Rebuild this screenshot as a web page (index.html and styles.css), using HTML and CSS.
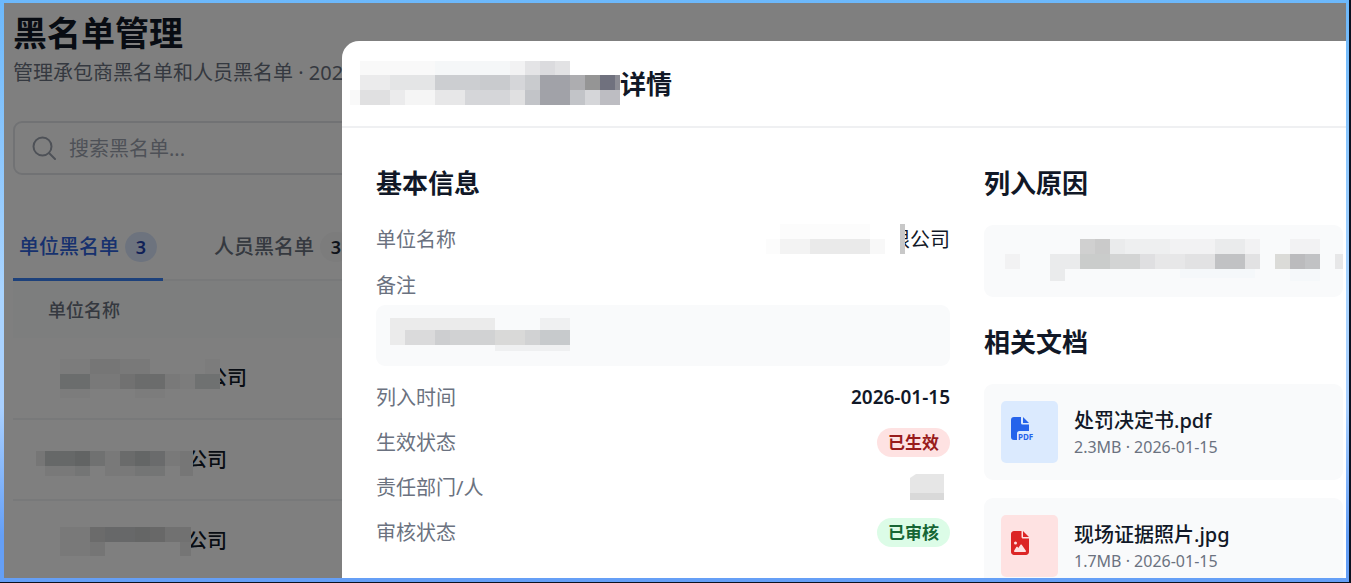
FILE: index.html
```html
<!DOCTYPE html>
<html lang="zh-CN">
<head>
<meta charset="utf-8">
<title>黑名单管理</title>
<link rel="stylesheet" href="styles.css">
</head>
<body>
<div class="frame">
<div class="screen">
  <main class="page">
    <h1 class="page-title">黑名单管理</h1>
    <p class="page-subtitle">管理承包商黑名单和人员黑名单 · 2026-01</p>
    <label class="search">
      <svg class="search-icon" viewBox="0 0 24 24" fill="none" stroke="currentColor" stroke-width="2" stroke-linecap="round" aria-hidden="true"><circle cx="10.500" cy="10.500" r="9"/><path d="M17 17l6 6"/></svg>
      <input class="search-input" type="text" placeholder="搜索黑名单..." aria-label="搜索黑名单">
    </label>
    <nav class="tabs">
      <button class="tab tab-active" type="button">单位黑名单<span class="count count-active">3</span></button>
      <button class="tab" type="button">人员黑名单<span class="count">3</span></button>
    </nav>
    <table class="list">
      <thead><tr><th scope="col">单位名称</th></tr></thead>
      <tbody>
        <tr><td><div class="company">
          <svg class="mosaic" width="184" height="40" viewBox="36 358 184 40" shape-rendering="crispEdges" aria-hidden="true"><path fill="#fff" d="M195 358h25v40h-25z"/><path fill="#f3f3f3" d="M120 359h30v15h-30zM90 374h30v15H90zM165 374h15v15h-15z"/><path fill="#f9f9f9" d="M60 359h30v15H60zM60 389h30v14H60zM135 389h30v14h-30z"/><path fill="#ececec" d="M90 359h30v15H90z"/><path fill="#d7dadb" d="M60 374h30v15H60z"/><path fill="#e2e2e2" d="M120 374h15v15h-15z"/><path fill="#d6d8d8" d="M135 374h30v15h-30z"/><path fill="#f9f9f9" d="M180 374h15v15h-15zM205 359h15v15h-15z"/><path fill="#dfe2e3" d="M195 374h25v15h-25z"/></svg><span class="company-name tuck-lg">公司</span></div></td></tr>
        <tr><td><div class="company">
          <svg class="mosaic" width="157" height="40" viewBox="36 438 157 40" shape-rendering="crispEdges" aria-hidden="true"><path fill="#fff" d="M180 438h13v40h-13z"/><path fill="#ececec" d="M36 449h9v15h-9zM141 449h15v15h-15z"/><path fill="#ccd0d0" d="M45 449h30v15H45z"/><path fill="#c5c8c8" d="M75 449h15v15H75z"/><path fill="#e0e2e3" d="M90 449h15v15H90z"/><path fill="#f2f2f2" d="M45 464h30v10H45zM105 449h15v15h-15zM105 464h30v10h-30zM165 449h15v15h-15z"/><path fill="#e8eaeb" d="M75 464h15v10H75zM135 464h30v10h-30z"/><path fill="#d5d7d7" d="M120 449h15v15h-15z"/><path fill="#c9cccd" d="M135 449h15v15h-15z"/><path fill="#d5d6d8" d="M150 449h15v15h-15z"/><path fill="#ededed" d="M180 449h13v25h-13z"/></svg><span class="company-name tuck-md">公司</span></div></td></tr>
        <tr><td><div class="company">
          <svg class="mosaic" width="155" height="40" viewBox="36 518 155 40" shape-rendering="crispEdges" aria-hidden="true"><path fill="#fff" d="M180 518h11v40h-11z"/><path fill="#f2f2f2" d="M60 524h30v15H60zM60 539h30v14H60z"/><path fill="#d7d7d7" d="M90 524h15v15H90z"/><path fill="#cfd1d2" d="M105 524h30v15h-30z"/><path fill="#cbcccd" d="M135 524h15v15h-15z"/><path fill="#d0d1d1" d="M150 524h15v15h-15z"/><path fill="#e2e2e2" d="M165 524h26v15h-26z"/><path fill="#ebebeb" d="M90 539h15v14H90zM180 539h11v14h-11z"/></svg><span class="company-name tuck-sm">公司</span></div></td></tr>
      </tbody>
    </table>
  </main>

  <div class="overlay">
    <section class="modal" role="dialog" aria-labelledby="modal-title">
      <header class="modal-header">
        <svg class="mosaic" width="270" height="46" viewBox="350 60 270 46" shape-rendering="crispEdges" aria-hidden="true"><path fill="#f9f9f9" d="M360 60h75v14h-75zM350 89h10v15h-10z"/><path fill="#f5f7f8" d="M435 60h75v14h-75z"/><path fill="#f2f2f3" d="M510 60h15v14h-15z"/><path fill="#e4e4e6" d="M525 60h15v14h-15z"/><path fill="#dbdbde" d="M540 60h15v14h-15z"/><path fill="#e2e2e4" d="M555 60h15v14h-15z"/><path fill="#ebebec" d="M360 74h30v15h-30zM390 89h15v15h-15z"/><path fill="#e4e5e6" d="M390 74h45v15h-45z"/><path fill="#ccced1" d="M435 74h45v15h-45z"/><path fill="#c9cbce" d="M480 74h30v15h-30zM525 74h15v15h-15z"/><path fill="#d5d6d9" d="M510 74h15v15h-15zM465 89h45v15h-45zM585 89h15v15h-15z"/><path fill="#a1a2a8" d="M540 74h30v30h-30z"/><path fill="#adadb0" d="M570 74h15v15h-15z"/><path fill="#959595" d="M585 74h15v15h-15z"/><path fill="#70717e" d="M600 74h15v15h-15z"/><path fill="#8c8c94" d="M615 74h5v15h-5z"/><path fill="#e0e0e1" d="M360 89h30v15h-30zM510 89h15v15h-15z"/><path fill="#f5f5f5" d="M405 89h30v15h-30z"/><path fill="#e7e7e8" d="M435 89h30v15h-30z"/><path fill="#c2c4c8" d="M525 89h15v15h-15zM570 89h15v15h-15z"/><path fill="#bdbdc2" d="M600 89h20v15h-20z"/></svg><h2 class="heading" id="modal-title">详情</h2>
      </header>
      <div class="modal-body">
        <section class="info">
          <h3 class="heading">基本信息</h3>
          <dl class="fields">
            <div class="field"><dt>单位名称</dt><dd class="field-company"><svg class="mosaic" width="145" height="30" viewBox="760 224 145 30" shape-rendering="crispEdges" aria-hidden="true"><path fill="#fff" d="M885 224h20v30h-20z"/><path fill="#fcfcfc" d="M780 224h90v15h-90zM766 239h14v15h-14z"/><path fill="#f3f3f3" d="M780 239h30v15h-30z"/><path fill="#eaeaea" d="M810 239h60v15h-60z"/><path fill="#f8f8f8" d="M870 239h15v15h-15z"/><path fill="#c8c8c8" d="M900 224h5v30h-5z"/></svg><span class="tuck-field">限公司</span></dd></div>
            <div class="field field-stacked"><dt>备注</dt><dd class="note note-remark"><svg class="mosaic" width="180" height="36" viewBox="390 316 180 36" shape-rendering="crispEdges" aria-hidden="true"><path fill="#ebebeb" d="M390 317h105v27H390z"/><path fill="#eff0f1" d="M540 317h30v12h-30zM495 344h75v6h-75z"/><path fill="#dadadb" d="M405 329h30v15h-30z"/><path fill="#cdced0" d="M435 329h15v15h-15z"/><path fill="#d1d2d3" d="M450 329h45v15h-45zM525 329h15v15h-15z"/><path fill="#d9d9d8" d="M495 329h30v15h-30z"/><path fill="#c7cacc" d="M540 329h30v15h-30z"/></svg></dd></div>
            <div class="field"><dt>列入时间</dt><dd class="date">2026-01-15</dd></div>
            <div class="field"><dt>生效状态</dt><dd><span class="badge badge-red">已生效</span></dd></div>
            <div class="field"><dt>责任部门/人</dt><dd class="field-owner"><svg class="mosaic" width="34" height="26" viewBox="0 0 34 26" aria-hidden="true"><path fill="#e6e6e6" d="M0 4l6-4h28v26H0z"/><path fill="#d9d9d9" d="M0 19h34v7H0z"/></svg></dd></div>
            <div class="field"><dt>审核状态</dt><dd><span class="badge badge-green">已审核</span></dd></div>
          </dl>
        </section>
        <div class="aside">
          <section>
            <h3 class="heading">列入原因</h3>
            <div class="note note-reason"><svg class="mosaic" width="343" height="48" viewBox="1000 237 343 48" shape-rendering="crispEdges" aria-hidden="true"><path fill="#d0d0d0" d="M1080 239h15v15h-15z"/><path fill="#cacaca" d="M1095 239h15v15h-15z"/><path fill="#eaebec" d="M1110 239h15v15h-15zM1215 239h30v15h-30zM1050 254h30v15h-30zM1050 269h15v12h-15z"/><path fill="#eeeff0" d="M1125 239h45v15h-45z"/><path fill="#f2f2f3" d="M1170 239h45v15h-45zM1245 239h15v15h-15zM1290 239h30v15h-30zM1005 254h15v15h-15z"/><path fill="#cacccb" d="M1080 254h30v15h-30z"/><path fill="#d3d4d4" d="M1110 254h30v15h-30z"/><path fill="#dfdfe1" d="M1140 254h15v15h-15z"/><path fill="#e7e7e8" d="M1155 254h30v15h-30zM1335 254h8v15h-8z"/><path fill="#e2e2e3" d="M1185 254h30v15h-30zM1245 254h15v15h-15z"/><path fill="#c1c2c4" d="M1215 254h30v15h-30zM1305 254h15v15h-15z"/><path fill="#dbdbd8" d="M1275 254h15v15h-15z"/><path fill="#bbbbbd" d="M1290 254h15v15h-15z"/><path fill="#f5f8fa" d="M1180 269h75v9h-75zM1290 269h30v12h-30z"/></svg></div>
          </section>
          <section>
            <h3 class="heading">相关文档</h3>
            <ul class="docs">
              <li class="doc">
                <span class="doc-icon doc-pdf"><svg width="26" height="30" viewBox="0 0 26 30" fill="currentColor" aria-hidden="true"><path d="M3 0h7v6q0 1.500 1.500 1.500H18V14H8.500Q6 14 6 16.500V23H3q-3 0-3-3V3Q0 0 3 0z"/><path d="M12 0l6 6h-6z"/><text class="pdf-label" x="7" y="23">PDF</text></svg></span>
                <div><div class="doc-name">处罚决定书.pdf</div><div class="doc-meta">2.3MB · 2026-01-15</div></div>
              </li>
              <li class="doc">
                <span class="doc-icon doc-image"><svg width="18" height="24" viewBox="0 0 384 512" fill="currentColor" aria-hidden="true"><path d="M64 0C28.700 0 0 28.700 0 64V448c0 35.300 28.700 64 64 64H320c35.300 0 64-28.700 64-64V160H256c-17.700 0-32-14.300-32-32V0H64zM256 0V128H384L256 0zM64 256a32 32 0 1 1 64 0 32 32 0 1 1-64 0zm152 32c5.300 0 10.200 2.600 13.200 6.900l88 128c3.400 4.900 3.700 11.300 1 16.500s-8.200 8.600-14.200 8.600H80c-5.800 0-11.100-3.100-13.900-8.100s-2.800-11.200.2-16.100l48-80c2.900-4.800 8.100-7.800 13.700-7.800s10.800 2.900 13.700 7.800l12.800 21.400 48.300-70.200c3-4.300 7.900-6.900 13.200-6.900z"/></svg></span>
                <div><div class="doc-name">现场证据照片.jpg</div><div class="doc-meta">1.7MB · 2026-01-15</div></div>
              </li>
            </ul>
          </section>
        </div>
      </div>
    </section>
  </div>
</div>
</div>
</body>
</html>
```

FILE: styles.css
```css
* { box-sizing: border-box; }

body {
  margin: 0;
  height: 100vh;
  overflow: hidden;
  padding: 0 2px 1px 0;
  background: #0b1220;
  color: #111827;
  font: 20px/28px "Noto Sans", "Noto Sans CJK SC", sans-serif;
}

h1, h2, h3, p, dl, dd, ul { margin: 0; padding: 0; }
ul { list-style: none; }

.frame {
  height: 100%;
  padding: 3px 3px 4px 4px;
  background: linear-gradient(#6cb8fb, #a9d4ff 50%, #a9d0ff 70%, #659ff6 92%);
}

.screen {
  position: relative;
  height: 100%;
  overflow: hidden;
  background: #fff;
}

.page { padding: 9px 8px 0 9px; }

.page-title { font-size: 34px; line-height: 42px; font-weight: 700; }

.page-subtitle { margin-top: 5px; color: #6b7280; }

.search {
  display: flex;
  align-items: center;
  gap: 13px;
  height: 54px;
  margin-top: 34px;
  padding: 0 17px;
  border: 2px solid #e3e5e9;
  border-radius: 9px;
}

.search-icon { width: 24px; height: 24px; color: #9ca3af; }

.search-input {
  flex: 1;
  border: 0;
  outline: 0;
  padding: 2px 0 0;
  background: transparent;
  font: inherit;
}

.search-input::placeholder { color: #9ca3af; opacity: 1; }

.tabs {
  display: flex;
  gap: 45px;
  margin-top: 38px;
  border-bottom: 2px solid #f1f2f4;
}

.tab {
  display: flex;
  align-items: center;
  gap: 6px;
  height: 68px;
  margin-bottom: -2px;
  padding: 3px 6px 0;
  border: 0;
  border-bottom: 3px solid transparent;
  background: none;
  color: #6b7280;
  font: inherit;
  font-weight: 500;
}

.tab-active { border-color: #3b82f6; color: #2f63dc; }

.count {
  width: 32px;
  border-radius: 15px;
  background: #f8f8f9;
  color: #1f2937;
  font-size: 18px;
  line-height: 30px;
  font-weight: 600;
}

.count-active { background: #dbe7fc; color: #1e40af; }

.list { width: 100%; border-collapse: collapse; }

.list th {
  height: 57px;
  padding: 0 35px;
  background: #fbfcfc;
  color: #6b7280;
  font-size: 18px;
  font-weight: 500;
  text-align: left;
}

.list td {
  height: 81px;
  padding: 0 23px;
  border-bottom: 2px solid #f1f2f4;
}

.company, .field-company { display: flex; align-items: center; }
.company-name { font-weight: 500; }

.mosaic { position: relative; z-index: 1; flex: none; display: block; }

.tuck-lg { margin-left: -13px; }
.tuck-md { margin-left: -6px; }
.tuck-sm { margin-left: -4px; }
.tuck-field { margin-left: -15px; padding-top: 2px; }

.overlay {
  position: absolute;
  inset: 0;
  z-index: 2;
  padding: 38px 0 0 338px;
  background: rgba(0, 0, 0, 0.5);
}

.modal {
  height: 100%;
  overflow: hidden;
  border-top-left-radius: 17px;
  background: #fff;
}

.modal-header {
  display: flex;
  align-items: center;
  height: 87px;
  padding-left: 8px;
  border-bottom: 2px solid #eff0f2;
}

.heading { font-size: 26px; line-height: 34px; font-weight: 700; }

.modal-body {
  display: grid;
  grid-template-columns: 574fr 359fr;
  gap: 34px;
  padding: 38px 3px 0 34px;
}

.fields {
  display: flex;
  flex-direction: column;
  gap: 17px;
  margin-top: 25px;
}

.field {
  display: flex;
  align-items: center;
  justify-content: space-between;
  height: 28px;
}

.field dt { padding-top: 2px; color: #6b7280; }
.field-stacked { display: block; height: auto; }
.field-owner { padding-right: 6px; }

.note {
  border-radius: 9px;
  background: #f9fafb;
  overflow: hidden;
}

.note-remark { height: 61px; margin-top: 5px; padding: 12px 14px; }
.note-reason { margin-top: 25px; padding: 12px 0 12px 16px; }

.date { font-size: 19px; font-weight: 600; }

.badge {
  display: block;
  padding: 0 11px;
  border-radius: 15px;
  font-size: 17px;
  line-height: 29px;
  font-weight: 700;
}

.badge-red { background: #fee2e2; color: #991b1b; }
.badge-green { background: #dcfce7; color: #166534; }

.aside { display: flex; flex-direction: column; gap: 28px; min-width: 0; }

.docs { display: flex; flex-direction: column; gap: 18px; margin-top: 25px; }

.doc {
  display: flex;
  align-items: center;
  gap: 16px;
  padding: 17px;
  border-radius: 9px;
  background: #f9fafb;
}

.doc-icon {
  width: 57px;
  height: 62px;
  padding: 16px 10px;
  border-radius: 5px;
}

.doc-pdf { background: #dbeafe; color: #2563eb; }
.doc-image { background: #fee2e2; color: #dc2626; }
.pdf-label { font-size: 8px; font-weight: 700; }

.doc-name { padding-top: 3px; line-height: 26px; font-weight: 500; }
.doc-meta { color: #6b7280; font-size: 16px; line-height: 26px; }
```
